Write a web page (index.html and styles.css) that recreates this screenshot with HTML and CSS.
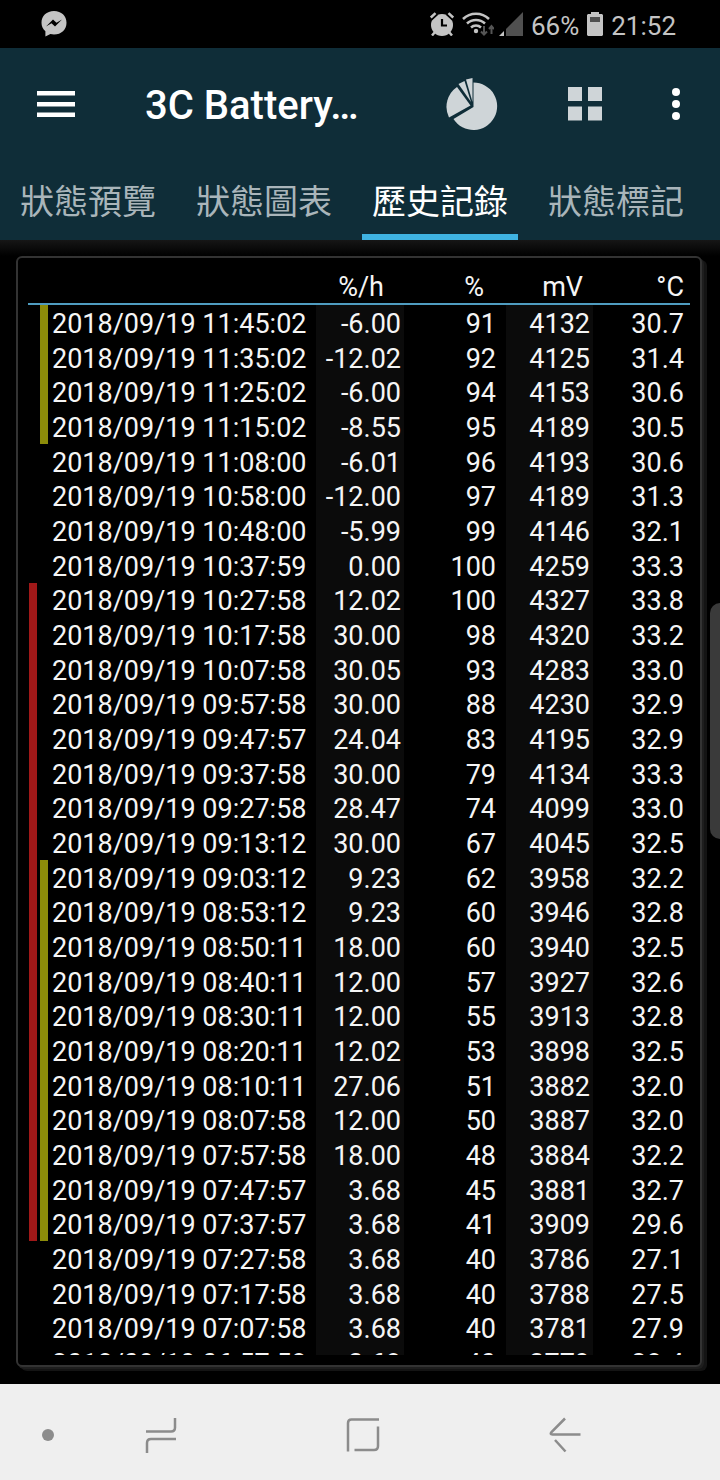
FILE: index.html
```html
<!DOCTYPE html>
<html lang="zh-Hant">

<head>
  <meta charset="UTF-8">
  <meta name="viewport" content="width=device-width, initial-scale=1.0">
  <title>3C Battery</title>
  <link rel="stylesheet" href="styles.css">
</head>

<body>
  <div class="status-bar">
    <svg class="messenger" width="26" height="26" viewBox="0 0 26 26">
      <path fill="#c4c4c4" d="M13 0C5.600 0 .5 5 .5 11.800c0 3.400 1.400 6.400 3.900 8.500V25.500l5-2.400c1.100.3 2.300.5 3.600.5 7.400 0 12.500-5 12.500-11.800S20.400 0 13 0z" />
      <path fill="#000" d="M5 15.500l7-7 3.500 3.200 5.500-3.200-7 7-3.500-3.200z" />
    </svg>
    <div class="indicators">
      <svg width="24" height="24" viewBox="0 0 24 24">
        <circle cx="12" cy="13" r="11" fill="#c4c4c4" />
        <path stroke="#000" stroke-width="1.500" d="M1.500 8l6-5.500M16.500 2.500l6 5.500" />
        <path stroke="#c4c4c4" stroke-width="2.500" d="M.8 5.500l4.700-4.300M18.500 1.200l4.700 4.300M5 20l-3 3.500M19 20l3 3.500" />
        <path stroke="#000" stroke-width="2.200" fill="none" d="M12 7v6.500h5" />
      </svg>
      <svg class="wifi" width="32" height="26" viewBox="0 0 32 26">
        <g fill="none" stroke="#c4c4c4" stroke-width="2.500">
          <path d="M1 8a18.500 18.500 0 0 1 26 0" />
          <path d="M5 12.500a13 13 0 0 1 18 0" />
          <path d="M9 16.500a7.500 7.500 0 0 1 10 0" />
        </g>
        <circle cx="14" cy="20" r="2.200" fill="#c4c4c4" />
        <path fill="none" stroke="#555" stroke-width="2" d="M22 15v8M19 20.500l3 3 3-3M29.500 23v-7M27 18l2.500-3 2.500 3" />
      </svg>
      <svg width="24" height="24" viewBox="0 0 24 24">
        <path fill="#505050" d="M24 0v24H7V17z" />
        <path fill="#c4c4c4" d="M5 19v5H0z" />
      </svg>
      <span>66%</span>
      <svg width="16" height="24" viewBox="0 0 16 24">
        <path fill="#c4c4c4" d="M4 0h8v2h3l1 1v20l-1 1H1l-1-1V3l1-1h3z" />
        <path fill="#505050" d="M3 5h10v5H3z" />
      </svg>
      <span>21:52</span>
    </div>
  </div>

  <header>
    <div class="toolbar">
      <button type="button" aria-label="Menu">
        <svg width="38" height="26" viewBox="0 0 38 26">
          <path fill="#fff" d="M0 0h38v4.500H0zM0 11h38v4.500H0zM0 21.500h38V26H0z" />
        </svg>
      </button>
      <h1>3C Battery…</h1>
      <button type="button" aria-label="Chart">
        <svg width="52" height="52" viewBox="0 0 52 52">
          <g fill="#cfd5d8">
            <path d="M27.500 4.500a23.700 23.700 0 1 1-20 36.500L27.500 29z" />
            <path d="M24.500 27.500L3 39.500A24 24 0 0 1 11 9z" />
            <path d="M12.500 6l6-3L25 24z" />
            <path d="M20 1.500L26.500 0v24z" />
          </g>
        </svg>
      </button>
      <button type="button" aria-label="Grid">
        <svg width="34" height="34" viewBox="0 0 34 34">
          <path fill="#cfd5d8" d="M0 0h14v14H0zM20 0h14v14H20zM0 19.500h14v14H0zM20 19.500h14v14H20z" />
        </svg>
      </button>
      <button type="button" aria-label="More">
        <svg width="8" height="32" viewBox="0 0 8 32">
          <g fill="#fff">
            <circle cx="4" cy="4" r="4" />
            <circle cx="4" cy="16" r="4" />
            <circle cx="4" cy="28" r="4" />
          </g>
        </svg>
      </button>
    </div>
    <nav class="tabs">
      <a href="#preview">狀態預覽</a>
      <a href="#chart">狀態圖表</a>
      <a href="#history" class="active">歷史記錄</a>
      <a href="#markers">狀態標記</a>
    </nav>
  </header>

  <main>
    <div class="panel">
      <div class="history">
        <table>
          <colgroup>
            <col class="col-charge">
            <col class="col-screen">
            <col>
            <col class="col-rate">
            <col class="col-level">
            <col class="col-volt">
            <col class="col-temp">
          </colgroup>
          <thead>
            <tr><th colspan="3"></th><th class="h-rate">%/h</th><th class="h-level">%</th><th class="h-volt">mV</th><th class="h-temp">°C</th></tr>
          </thead>
          <tbody>
            <tr><td></td><td class="screen"></td><td>2018/09/19 11:45:02</td><td>-6.00</td><td>91</td><td>4132</td><td>30.7</td></tr>
            <tr><td></td><td class="screen"></td><td>2018/09/19 11:35:02</td><td>-12.02</td><td>92</td><td>4125</td><td>31.4</td></tr>
            <tr><td></td><td class="screen"></td><td>2018/09/19 11:25:02</td><td>-6.00</td><td>94</td><td>4153</td><td>30.6</td></tr>
            <tr><td></td><td class="screen"></td><td>2018/09/19 11:15:02</td><td>-8.55</td><td>95</td><td>4189</td><td>30.5</td></tr>
            <tr><td></td><td></td><td>2018/09/19 11:08:00</td><td>-6.01</td><td>96</td><td>4193</td><td>30.6</td></tr>
            <tr><td></td><td></td><td>2018/09/19 10:58:00</td><td>-12.00</td><td>97</td><td>4189</td><td>31.3</td></tr>
            <tr><td></td><td></td><td>2018/09/19 10:48:00</td><td>-5.99</td><td>99</td><td>4146</td><td>32.1</td></tr>
            <tr><td></td><td></td><td>2018/09/19 10:37:59</td><td>0.00</td><td>100</td><td>4259</td><td>33.3</td></tr>
            <tr><td class="charge"></td><td></td><td>2018/09/19 10:27:58</td><td>12.02</td><td>100</td><td>4327</td><td>33.8</td></tr>
            <tr><td class="charge"></td><td></td><td>2018/09/19 10:17:58</td><td>30.00</td><td>98</td><td>4320</td><td>33.2</td></tr>
            <tr><td class="charge"></td><td></td><td>2018/09/19 10:07:58</td><td>30.05</td><td>93</td><td>4283</td><td>33.0</td></tr>
            <tr><td class="charge"></td><td></td><td>2018/09/19 09:57:58</td><td>30.00</td><td>88</td><td>4230</td><td>32.9</td></tr>
            <tr><td class="charge"></td><td></td><td>2018/09/19 09:47:57</td><td>24.04</td><td>83</td><td>4195</td><td>32.9</td></tr>
            <tr><td class="charge"></td><td></td><td>2018/09/19 09:37:58</td><td>30.00</td><td>79</td><td>4134</td><td>33.3</td></tr>
            <tr><td class="charge"></td><td></td><td>2018/09/19 09:27:58</td><td>28.47</td><td>74</td><td>4099</td><td>33.0</td></tr>
            <tr><td class="charge"></td><td></td><td>2018/09/19 09:13:12</td><td>30.00</td><td>67</td><td>4045</td><td>32.5</td></tr>
            <tr><td class="charge"></td><td class="screen"></td><td>2018/09/19 09:03:12</td><td>9.23</td><td>62</td><td>3958</td><td>32.2</td></tr>
            <tr><td class="charge"></td><td class="screen"></td><td>2018/09/19 08:53:12</td><td>9.23</td><td>60</td><td>3946</td><td>32.8</td></tr>
            <tr><td class="charge"></td><td class="screen"></td><td>2018/09/19 08:50:11</td><td>18.00</td><td>60</td><td>3940</td><td>32.5</td></tr>
            <tr><td class="charge"></td><td class="screen"></td><td>2018/09/19 08:40:11</td><td>12.00</td><td>57</td><td>3927</td><td>32.6</td></tr>
            <tr><td class="charge"></td><td class="screen"></td><td>2018/09/19 08:30:11</td><td>12.00</td><td>55</td><td>3913</td><td>32.8</td></tr>
            <tr><td class="charge"></td><td class="screen"></td><td>2018/09/19 08:20:11</td><td>12.02</td><td>53</td><td>3898</td><td>32.5</td></tr>
            <tr><td class="charge"></td><td class="screen"></td><td>2018/09/19 08:10:11</td><td>27.06</td><td>51</td><td>3882</td><td>32.0</td></tr>
            <tr><td class="charge"></td><td class="screen"></td><td>2018/09/19 08:07:58</td><td>12.00</td><td>50</td><td>3887</td><td>32.0</td></tr>
            <tr><td class="charge"></td><td class="screen"></td><td>2018/09/19 07:57:58</td><td>18.00</td><td>48</td><td>3884</td><td>32.2</td></tr>
            <tr><td class="charge"></td><td class="screen"></td><td>2018/09/19 07:47:57</td><td>3.68</td><td>45</td><td>3881</td><td>32.7</td></tr>
            <tr><td class="charge"></td><td class="screen"></td><td>2018/09/19 07:37:57</td><td>3.68</td><td>41</td><td>3909</td><td>29.6</td></tr>
            <tr><td></td><td></td><td>2018/09/19 07:27:58</td><td>3.68</td><td>40</td><td>3786</td><td>27.1</td></tr>
            <tr><td></td><td></td><td>2018/09/19 07:17:58</td><td>3.68</td><td>40</td><td>3788</td><td>27.5</td></tr>
            <tr><td></td><td></td><td>2018/09/19 07:07:58</td><td>3.68</td><td>40</td><td>3781</td><td>27.9</td></tr>
            <tr><td></td><td></td><td>2018/09/19 06:57:58</td><td>3.68</td><td>40</td><td>3779</td><td>28.4</td></tr>
          </tbody>
        </table>
      </div>
    </div>
  </main>

  <div class="edge-handle"></div>

  <footer>
    <button type="button" class="dot" aria-label="Hide bar">
      <svg width="12" height="12" viewBox="0 0 12 12"><circle cx="6" cy="6" r="6" fill="#8c8c8c" /></svg>
    </button>
    <button type="button" aria-label="Recents">
      <svg width="32" height="36" viewBox="0 0 32 36">
        <path fill="none" stroke="#8c8c8c" stroke-width="2.500" d="M1 14.500h25q4 0 4-4V1M31 22H6q-4 0-4 4v10" />
      </svg>
    </button>
    <button type="button" aria-label="Home">
      <svg width="34" height="34" viewBox="0 0 34 34">
        <path fill="none" stroke="#8c8c8c" stroke-width="2.500" d="M2 33.500V5q0-3.500 3.500-3.500H33M32 8.500V28q0 4-4 4H8.500" />
      </svg>
    </button>
    <button type="button" aria-label="Back">
      <svg width="32" height="36" viewBox="0 0 32 36">
        <path fill="none" stroke="#8c8c8c" stroke-width="2.500" d="M16 1.500L2.500 15q-2 2.500 1 2.500H31.500M6 23l10.500 11.500" />
      </svg>
    </button>
  </footer>
</body>

</html>
```
FILE: styles.css
```css
* {
  box-sizing: border-box;
}

body {
  display: flex;
  flex-direction: column;
  height: 100vh;
  margin: 0;
  overflow: hidden;
  background-color: #000;
  color: #f5f5f5;
  font-family: Roboto, "Noto Sans CJK TC", sans-serif;
}

svg {
  display: block;
}

button {
  padding: 0;
  border: none;
  background: none;
  cursor: pointer;
}

/* Status bar */
.status-bar {
  display: flex;
  justify-content: space-between;
  align-items: center;
  height: 48px;
  padding: 0 44px 0 41px;
  color: #c4c4c4;
  font-size: 26px;
}

.indicators {
  display: flex;
  align-items: center;
  gap: 8px;
}

.indicators span {
  padding-top: 3px;
}

.wifi {
  margin-right: -3px;
}

/* Header */
header {
  background-color: #0f2d38;
}

.toolbar {
  display: flex;
  align-items: center;
  gap: 70px;
  height: 112px;
  padding: 0 40px 0 37px;
}

.toolbar h1 {
  flex: 1;
  margin: 0;
  padding-top: 4px;
  color: #fff;
  font-size: 40px;
  font-weight: 500;
  line-height: 48px;
  white-space: nowrap;
}

.tabs {
  display: flex;
  gap: 20px;
  height: 80px;
  padding: 0 10px;
  overflow: hidden;
}

.tabs a {
  padding: 12px 10px 0;
  border-bottom: 6px solid transparent;
  color: #a9b5ba;
  font-size: 34px;
  line-height: 60px;
  text-decoration: none;
  white-space: nowrap;
}

.tabs .active {
  border-bottom-color: #3fb3e2;
  color: #fff;
}

/* History list */
main {
  flex: 1;
  display: flex;
  min-height: 0;
  padding: 16px 18px 17px 16px;
  background: linear-gradient(#161616, #000 16px);
}

.panel {
  flex: 1;
  display: flex;
  min-width: 0;
  padding: 10px;
  border: 2px solid #333;
  border-radius: 6px;
  background-color: #000;
  box-shadow: 2px 2px 0 #1e1e1e, 5px 4px 0 #141414;
}

.history {
  flex: 1;
  overflow: hidden;
}

table {
  width: 100%;
  table-layout: fixed;
  border-spacing: 0;
  font-size: 27px;
  line-height: 32px;
}

.col-charge {
  width: 11px;
}

.col-screen {
  width: 13px;
}

.col-rate {
  width: 88px;
}

.col-level {
  width: 102px;
}

.col-volt {
  width: 87px;
}

.col-temp {
  width: 97px;
}

th {
  height: 37px;
  padding: 3px 0 0;
  border-bottom: 2px solid #4f9cc0;
  font-weight: 400;
  text-align: right;
}

.h-rate {
  padding-right: 20px;
}

.h-level {
  padding-right: 22px;
}

.h-volt {
  padding-right: 10px;
}

.h-temp {
  padding-right: 6px;
}

td {
  height: 35px;
  padding: 2px 3px 0 0;
  text-align: right;
  white-space: nowrap;
}

tr:nth-child(3n) td {
  height: 34px;
}

td:nth-child(1),
td:nth-child(2) {
  padding: 0;
  border: solid transparent;
  border-width: 0 2px 0 1px;
  background-clip: padding-box;
}

td:nth-child(2) {
  border-right-width: 4px;
}

td:nth-child(3) {
  text-align: left;
}

td:nth-child(4),
td:nth-child(6) {
  background-color: #0b0b0b;
}

td:nth-child(5) {
  padding-right: 10px;
}

td:nth-child(7) {
  padding-right: 6px;
}

.charge {
  background-color: #a01818;
}

.screen {
  background-color: #8c8c0a;
}

/* Edge panel handle, lies over the list */
.edge-handle {
  position: absolute;
  top: 603px;
  right: 0;
  width: 10px;
  height: 236px;
  border-radius: 10px 0 0 10px;
  background-color: #3a3a3a;
}

/* Navigation bar */
footer {
  display: grid;
  grid-template-columns: 60px 1fr 1fr 1fr 54px;
  height: 96px;
  padding-top: 6px;
  background-color: #efefef;
}

footer button {
  display: flex;
  justify-content: center;
  align-items: center;
}

footer .dot {
  justify-content: flex-end;
  padding-right: 6px;
}
```
